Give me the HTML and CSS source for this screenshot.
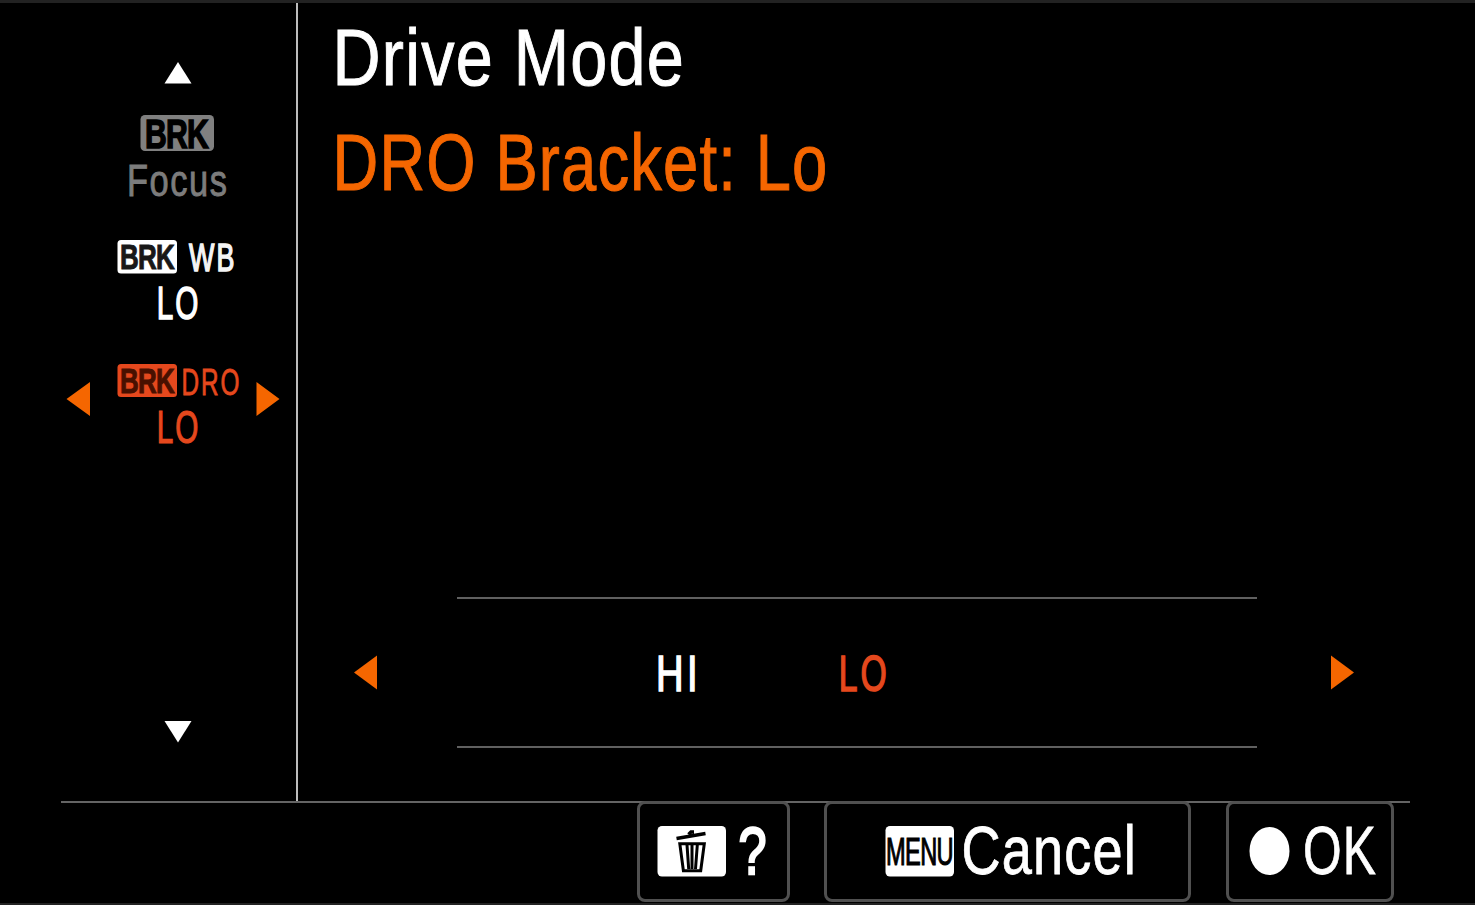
FILE: index.html
```
<!DOCTYPE html>
<html lang="en">
<head>
<meta charset="utf-8">
<title>Drive Mode</title>
<link rel="stylesheet" href="styles.css">
</head>
<body>
<div class="screen">
  <div class="content">
    <nav class="sidebar">
      <svg class="scroll-up" width="28" height="22" viewBox="0 0 28 22"><path class="fill-white" d="M14 0L27.500 21.500H.5z"/></svg>
      <svg class="mode" width="236" height="97" viewBox="60 110 236 97">
        <rect class="fill-gray" x="140.500" y="115" width="73.500" height="36" rx="4.500"/>
        <text class="brk brk-large" x="145" y="147.500" textLength="63" lengthAdjust="spacingAndGlyphs">BRK</text>
        <text class="focus" x="127" y="195.500" textLength="101.500" lengthAdjust="spacingAndGlyphs">Focus</text>
      </svg>
      <svg class="mode mode-wb" width="236" height="98" viewBox="60 235 236 98">
        <rect class="fill-white" x="117.500" y="240" width="59.500" height="33.500" rx="3.500"/>
        <text class="brk brk-dark" x="120" y="269" textLength="54" lengthAdjust="spacingAndGlyphs">BRK</text>
        <text class="tag tag-wb" x="189" y="271" textLength="47.500" lengthAdjust="spacingAndGlyphs">WB</text>
        <text class="level level-white" x="156.800" y="319" textLength="43.500" lengthAdjust="spacingAndGlyphs">LO</text>
      </svg>
      <svg class="mode mode-dro" width="236" height="98" viewBox="60 360 236 98">
        <path class="fill-orange" d="M66.500 399L90 382v34zM279.500 399L256.500 382v34z"/>
        <rect class="fill-red" x="117.500" y="364" width="59.500" height="33" rx="3.500"/>
        <text class="brk brk-maroon" x="120" y="393" textLength="54" lengthAdjust="spacingAndGlyphs">BRK</text>
        <text class="tag tag-dro" x="181.500" y="394.500" textLength="60" lengthAdjust="spacingAndGlyphs">DRO</text>
        <text class="level level-red" x="156.800" y="442.500" textLength="43.500" lengthAdjust="spacingAndGlyphs">LO</text>
      </svg>
      <svg class="scroll-down" width="28" height="22" viewBox="0 0 28 22"><path class="fill-white" d="M.5 0H27.500L14 21.500z"/></svg>
    </nav>
    <main class="panel">
      <svg class="heading" width="900" height="210" viewBox="298 3 900 210">
        <text class="title" x="332.500" y="85" textLength="352.500" lengthAdjust="spacingAndGlyphs">Drive Mode</text>
        <text class="title subtitle" x="332.500" y="190" textLength="496" lengthAdjust="spacingAndGlyphs">DRO Bracket: Lo</text>
      </svg>
      <div class="chooser">
        <svg width="23" height="35" viewBox="0 0 23 35"><path class="fill-orange" d="M0 17.500L23 .5v34z"/></svg>
        <div class="options">
          <svg width="800" height="60" viewBox="457 642 800 60">
            <text class="option option-hi" x="656" y="690" textLength="45" lengthAdjust="spacingAndGlyphs">HI</text>
            <text class="option option-lo" x="838.800" y="690" textLength="51" lengthAdjust="spacingAndGlyphs">LO</text>
          </svg>
        </div>
        <svg width="23" height="35" viewBox="0 0 23 35"><path class="fill-orange" d="M23 17.500L0 .5v34z"/></svg>
      </div>
    </main>
  </div>
  <footer class="footer">
    <div class="key key-help">
      <svg width="147" height="95" viewBox="640 804 147 95">
        <rect class="fill-white" x="657.500" y="826" width="68.500" height="50.500" rx="4.500"/>
        <path class="trash-lid" d="M676.500 838.500L705.500 833.500M688.500 834.500L691 832H694"/>
        <path class="trash-can" d="M679.800 843.800H704.300L700.700 870.800H683.400zM687 845L688.700 869M692 845V869M697.300 845L695.500 869"/>
        <text class="help" x="738.500" y="874" textLength="28" lengthAdjust="spacingAndGlyphs">?</text>
      </svg>
    </div>
    <div class="key key-cancel">
      <svg width="361" height="95" viewBox="827 804 361 95">
        <rect class="fill-white" x="885.500" y="826" width="68.500" height="50.500" rx="4.500"/>
        <text class="menu" x="886" y="864.500" textLength="67" lengthAdjust="spacingAndGlyphs">MENU</text>
        <text class="key-text" x="961.500" y="873.500" textLength="175.500" lengthAdjust="spacingAndGlyphs">Cancel</text>
      </svg>
    </div>
    <div class="key key-ok">
      <svg width="162" height="95" viewBox="1229 804 162 95">
        <ellipse class="fill-white" cx="1269.500" cy="851" rx="20" ry="24"/>
        <text class="key-text" x="1303" y="873.500" textLength="74" lengthAdjust="spacingAndGlyphs">OK</text>
      </svg>
    </div>
  </footer>
</div>
</body>
</html>
```
FILE: styles.css
```
* { box-sizing: border-box; }

body {
  margin: 0;
  background: #000;
  font-family: "Liberation Sans", Arial, sans-serif;
}

svg { display: block; flex: none; }

.screen {
  display: flex;
  flex-direction: column;
  width: 1475px;
  height: 905px;
  border-top: 3px solid #222;
  border-bottom: 2px solid #222;
}

.content {
  display: grid;
  grid-template-columns: 298px 1fr;
  height: 798px;
  flex: none;
}

.sidebar {
  display: flex;
  flex-direction: column;
  align-items: center;
  padding: 59px 0 0 60px;
  border-right: 2px solid #bcbcbc;
}

.mode { margin-top: 26px; }
.mode-wb { margin-top: 28px; }
.mode-dro { margin-top: 27px; }
.scroll-down { margin-top: 263px; }

.fill-white { fill: #fff; }
.fill-gray { fill: #808080; }
.fill-orange { fill: #f56600; }
.fill-red { fill: #e5481d; }

.brk {
  font-size: 35.500px;
  font-weight: bold;
  letter-spacing: -1px;
  stroke: #000;
  stroke-width: 1px;
}
.brk-large { font-size: 41px; stroke-width: 1.500px; }
.brk-dark { fill: #181818; stroke: #181818; }
.brk-maroon { fill: #481000; stroke: #481000; }

.focus {
  fill: #7c7c7c;
  stroke: #7c7c7c;
  stroke-width: .9px;
  font-size: 45px;
  letter-spacing: 2px;
}

.tag { letter-spacing: 3px; }
.tag-wb { fill: #f4f4f4; stroke: #f4f4f4; stroke-width: 1.500px; font-size: 38px; }
.tag-dro { fill: #e5481d; stroke: #e5481d; stroke-width: .8px; font-size: 36.500px; }

.level { font-size: 46px; letter-spacing: 3px; }
.level-white { fill: #fff; stroke: #fff; stroke-width: 1.500px; }
.level-red { fill: #e5481d; stroke: #e5481d; stroke-width: 1.200px; }

.panel { display: flex; flex-direction: column; }

.title { fill: #fff; stroke: #fff; stroke-width: 1px; font-size: 80px; letter-spacing: 1.500px; }
.subtitle { fill: #f56600; stroke: #f56600; }

.chooser {
  display: flex;
  align-items: center;
  margin: 384px 0 0 56px;
}

.options {
  display: flex;
  align-items: center;
  width: 800px;
  height: 151px;
  margin: 0 74px 0 80px;
  border: solid #606060;
  border-width: 2px 0;
}

.option { font-size: 50px; letter-spacing: 4.500px; stroke-width: 1.500px; }
.option-hi { fill: #fff; stroke: #fff; }
.option-lo { fill: #e5481d; stroke: #e5481d; }

.footer {
  display: flex;
  width: 1349px;
  height: 102px;
  margin-left: 61px;
  padding-left: 576px;
  border-top: 2px solid #646464;
}

.key {
  height: 101px;
  margin-top: -2px;
  border: 3px solid #505050;
  border-radius: 8px;
}
.key-help { width: 153px; }
.key-cancel { width: 367px; margin-left: 34px; }
.key-ok { width: 168px; margin-left: 35px; }

.trash-lid { fill: none; stroke: #000; stroke-width: 3.500px; }
.trash-can { fill: none; stroke: #000; stroke-width: 3px; }

.help { fill: #fff; stroke: #fff; stroke-width: 2.500px; font-size: 66px; }
.menu { font-size: 39px; letter-spacing: -1px; stroke: #000; stroke-width: 1.200px; }
.key-text { fill: #fff; stroke: #fff; stroke-width: .8px; font-size: 68.500px; letter-spacing: 1.500px; }
```
